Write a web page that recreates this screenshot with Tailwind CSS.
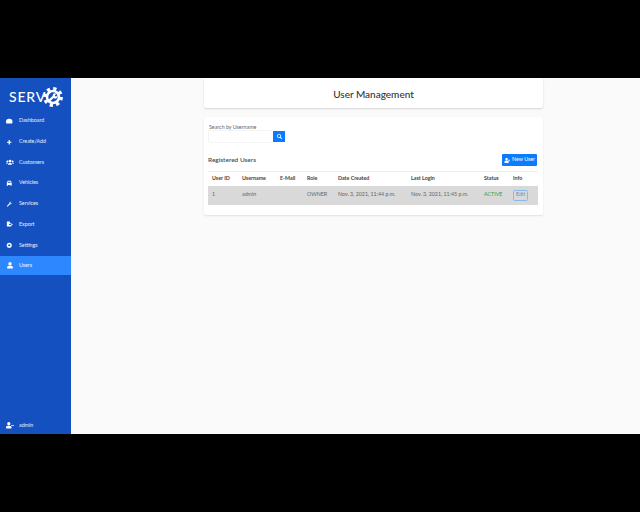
<!DOCTYPE html>
<html lang="en">
<head>
    <meta charset="UTF-8">
    <title>User Management</title>
    <script src="https://cdn.jsdelivr.net/npm/@tailwindcss/browser@4"></script>
</head>
<body class="h-[512px] w-[640px] overflow-hidden bg-black flex flex-col justify-center font-['Lato',sans-serif]">
    <div class="h-[356px] flex bg-[#fafafa]">
        <!-- Sidebar -->
        <aside class="w-[71px] shrink-0 bg-[#1450bf] flex flex-col text-white/90">
            <div class="h-[33px] flex items-center pl-[9px] pt-[4px] gap-[1px]">
                <span class="w-[33px] text-[14px] leading-none font-medium tracking-[0.8px] text-white">SERV</span>
                <svg class="w-[20px] h-[20px]" viewBox="0 0 24 24">
                    <circle cx="12" cy="12" r="7.2" fill="none" stroke="#fff" stroke-width="3"/>
                    <circle cx="12" cy="12" r="10" fill="none" stroke="#fff" stroke-width="3.800" stroke-dasharray="3.900 3.950"/>
                    <path d="M8 16L13 11" stroke="#fff" stroke-width="2.600" stroke-linecap="round"/>
                    <path d="M11.500 9.500a3.200 3.200 0 0 1 4.500-1.300l-1.900 1.900 1.500 1.500 1.900-1.900a3.200 3.200 0 0 1-4.500 3.800z" fill="#fff"/>
                </svg>
            </div>
            <nav class="flex flex-col text-[5.300px]">
                <a class="h-[20.7px] flex items-center pl-[3px] gap-[3px]">
                    <span class="w-[13px] flex justify-center"><svg class="w-[6.500px] h-[6.500px]" viewBox="0 0 16 16" fill="#fff"><path d="M8 2a8 8 0 0 0-8 8c0 1.300.3 2.500.9 3.500h14.200c.6-1 .9-2.200.9-3.500a8 8 0 0 0-8-8z"/></svg></span>
                    <span>Dashboard</span>
                </a>
                <a class="h-[20.7px] flex items-center pl-[3px] gap-[3px]">
                    <span class="w-[13px] flex justify-center"><svg class="w-[6.500px] h-[6.500px]" viewBox="0 0 16 16" fill="#fff"><path d="M6.500 2.500h3v4h4v3h-4v4h-3v-4h-4v-3h4z"/></svg></span>
                    <span>Create/Add</span>
                </a>
                <a class="h-[20.7px] flex items-center pl-[3px] gap-[3px]">
                    <span class="w-[13px] flex justify-center"><svg class="w-[8px] h-[6.500px]" viewBox="0 0 20 16" fill="#fff"><circle cx="10" cy="5" r="3.500"/><circle cx="3.500" cy="6" r="2.500"/><circle cx="16.500" cy="6" r="2.500"/><path d="M5 14c0-3 2-5 5-5s5 2 5 5zM0 12c0-2 1-3 3-3l1.500.5L3.500 12zM20 12c0-2-1-3-3-3l-1.500.5 1 2.500z"/></svg></span>
                    <span>Customers</span>
                </a>
                <a class="h-[20.7px] flex items-center pl-[3px] gap-[3px]">
                    <span class="w-[13px] flex justify-center"><svg class="w-[6.500px] h-[6.500px]" viewBox="0 0 16 16" fill="#fff"><path d="M4 2h8l2 5.500V14h-3v-2H5v2H2V7.500zM5 4l-1 3h8l-1-3z"/></svg></span>
                    <span>Vehicles</span>
                </a>
                <a class="h-[20.7px] flex items-center pl-[3px] gap-[3px]">
                    <span class="w-[13px] flex justify-center"><svg class="w-[6.500px] h-[6.500px]" viewBox="0 0 16 16" fill="#fff"><path d="M2 12l6-6a4 4 0 0 1 5-4l-2.500 2.500L11.500 6.500 14 4a4 4 0 0 1-5 4.500l-5 5.500z"/></svg></span>
                    <span>Services</span>
                </a>
                <a class="h-[20.7px] flex items-center pl-[3px] gap-[3px]">
                    <span class="w-[13px] flex justify-center"><svg class="w-[7px] h-[7px]" viewBox="0 0 16 16" fill="#fff"><path d="M2 1h7v4h3v2H7v2h5v3.500H2zM12 5.500L16 8l-4 2.500z"/></svg></span>
                    <span>Export</span>
                </a>
                <a class="h-[20.7px] flex items-center pl-[3px] gap-[3px]">
                    <span class="w-[13px] flex justify-center"><svg class="w-[6.500px] h-[6.500px]" viewBox="0 0 16 16"><circle cx="8" cy="8" r="4.500" fill="none" stroke="#fff" stroke-width="3.500"/></svg></span>
                    <span>Settings</span>
                </a>
                <a class="h-[19.500px] flex items-center pl-[3px] gap-[3px] bg-[#2d87ff]">
                    <span class="w-[13px] flex justify-center"><svg class="w-[6px] h-[6.500px]" viewBox="0 0 448 512" fill="#fff"><path d="M224 256c70.700 0 128-57.300 128-128S294.700 0 224 0 96 57.300 96 128s57.300 128 128 128zm89.600 32h-16.700c-22.200 10.200-46.900 16-72.900 16s-50.600-5.800-72.900-16h-16.700C60.200 288 0 348.200 0 422.400V464c0 26.500 21.500 48 48 48h352c26.500 0 48-21.500 48-48v-41.600c0-74.200-60.200-134.400-134.400-134.400z"/></svg></span>
                    <span>Users</span>
                </a>
            </nav>
            <a class="mt-auto mb-[3px] h-[11px] flex items-center pl-[3px] gap-[3px] text-[5.300px]">
                <span class="w-[13px] flex justify-center"><svg class="w-[8px] h-[6.500px]" viewBox="0 0 640 512" fill="#fff"><path d="M224 256c70.700 0 128-57.300 128-128S294.700 0 224 0 96 57.300 96 128s57.300 128 128 128zm89.600 32h-16.700c-22.200 10.200-46.900 16-72.900 16s-50.600-5.800-72.900-16h-16.700C60.200 288 0 348.200 0 422.400V464c0 26.500 21.500 48 48 48h352c26.500 0 48-21.500 48-48v-41.600c0-74.200-60.200-134.400-134.400-134.400zM640 256v64H416v-64z"/></svg></span>
                <span>admin</span>
            </a>
        </aside>

        <!-- Main -->
        <main class="flex-1 pl-[133px]">
            <div class="w-[339px] h-[30px] pt-[3px] bg-white rounded-b-[2px] shadow-[0_1px_2px_rgba(0,0,0,0.15)] flex items-center justify-center text-[10px] font-medium text-[#333]">
                User Management
            </div>
            <section class="w-[339px] h-[98px] mt-[9px] bg-white rounded-[2px] shadow-[0_1px_2px_rgba(0,0,0,0.1)] px-[4px] pt-[7px]">
                <div class="pl-[1px] text-[5.300px] leading-[7px] text-[#666]">Search by Username</div>
                <div class="flex pl-[1px]">
                    <div class="w-[64px] h-[11px] bg-white shadow-[0_0_1px_rgba(0,0,0,0.25)]"></div>
                    <button class="w-[12px] h-[11px] bg-[#0d7bff] flex items-center justify-center">
                        <svg class="w-[5px] h-[5px]" viewBox="0 0 512 512" fill="#fff"><path d="M505 442.700L405.300 343c-4.500-4.500-10.600-7-17-7H372c27.600-35.300 44-79.700 44-128C416 93.100 322.900 0 208 0S0 93.100 0 208s93.100 208 208 208c48.300 0 92.700-16.400 128-44v16.300c0 6.400 2.500 12.500 7 17l99.700 99.700c9.400 9.400 24.600 9.400 33.900 0l28.300-28.300c9.400-9.400 9.400-24.600.1-34zM208 336c-70.700 0-128-57.200-128-128 0-70.700 57.200-128 128-128 70.700 0 128 57.200 128 128 0 70.700-57.200 128-128 128z"/></svg>
                    </button>
                </div>
                <div class="flex items-center justify-between h-[12px] mt-[12px] pr-[2px]">
                    <h2 class="text-[6.500px] font-medium text-[#444]">Registered Users</h2>
                    <button class="w-[35px] h-[12px] rounded-[1px] bg-[#0d7bff] text-white text-[5.300px] flex items-center justify-center gap-[1px]">
                        <svg class="w-[7px] h-[5px]" viewBox="0 0 640 512" fill="#fff"><path d="M224 256c70.700 0 128-57.300 128-128S294.700 0 224 0 96 57.300 96 128s57.300 128 128 128zm89.600 32h-16.700c-22.200 10.200-46.900 16-72.900 16s-50.600-5.800-72.900-16h-16.700C60.200 288 0 348.200 0 422.400V464c0 26.500 21.500 48 48 48h352c26.500 0 48-21.500 48-48v-41.600c0-74.200-60.200-134.400-134.400-134.400zM520 224v-64h-64v64h-64v64h64v64h64v-64h64v-64z"/></svg>
                        New User
                    </button>
                </div>
                <table class="w-[330px] table-fixed mt-[5px] text-[5.300px] text-left border-t border-[#eee]">
                    <thead>
                        <tr class="h-[14px] text-[#444]">
                            <th class="w-[34px] pl-[4px] pt-[1px] font-bold">User ID</th>
                            <th class="w-[38px] pt-[1px] font-bold">Username</th>
                            <th class="w-[27px] pt-[1px] font-bold">E-Mail</th>
                            <th class="w-[31px] pt-[1px] font-bold">Role</th>
                            <th class="w-[73px] pt-[1px] font-bold">Date Created</th>
                            <th class="w-[73px] pt-[1px] font-bold">Last Login</th>
                            <th class="w-[29px] pt-[1px] font-bold">Status</th>
                            <th class="pt-[1px] font-bold">Info</th>
                        </tr>
                    </thead>
                    <tbody>
                        <tr class="h-[19px] bg-[#d9d9d9] text-[#666]">
                            <td class="pl-[4px] pb-[1px]">1</td>
                            <td class="pb-[1px]">admin</td>
                            <td></td>
                            <td class="pb-[1px]">OWNER</td>
                            <td class="pb-[1px]">Nov. 3, 2021, 11:44 p.m.</td>
                            <td class="pb-[1px]">Nov. 3, 2021, 11:45 p.m.</td>
                            <td class="pb-[1px] text-[#3a9a3a]">ACTIVE</td>
                            <td>
                                <button class="w-[15px] h-[11px] rounded-[1.500px] border border-[#8ab8ee] text-[#5b8fd0] text-[5.300px] leading-none">Edit</button>
                            </td>
                        </tr>
                    </tbody>
                </table>
            </section>
        </main>
    </div>
</body>
</html>
